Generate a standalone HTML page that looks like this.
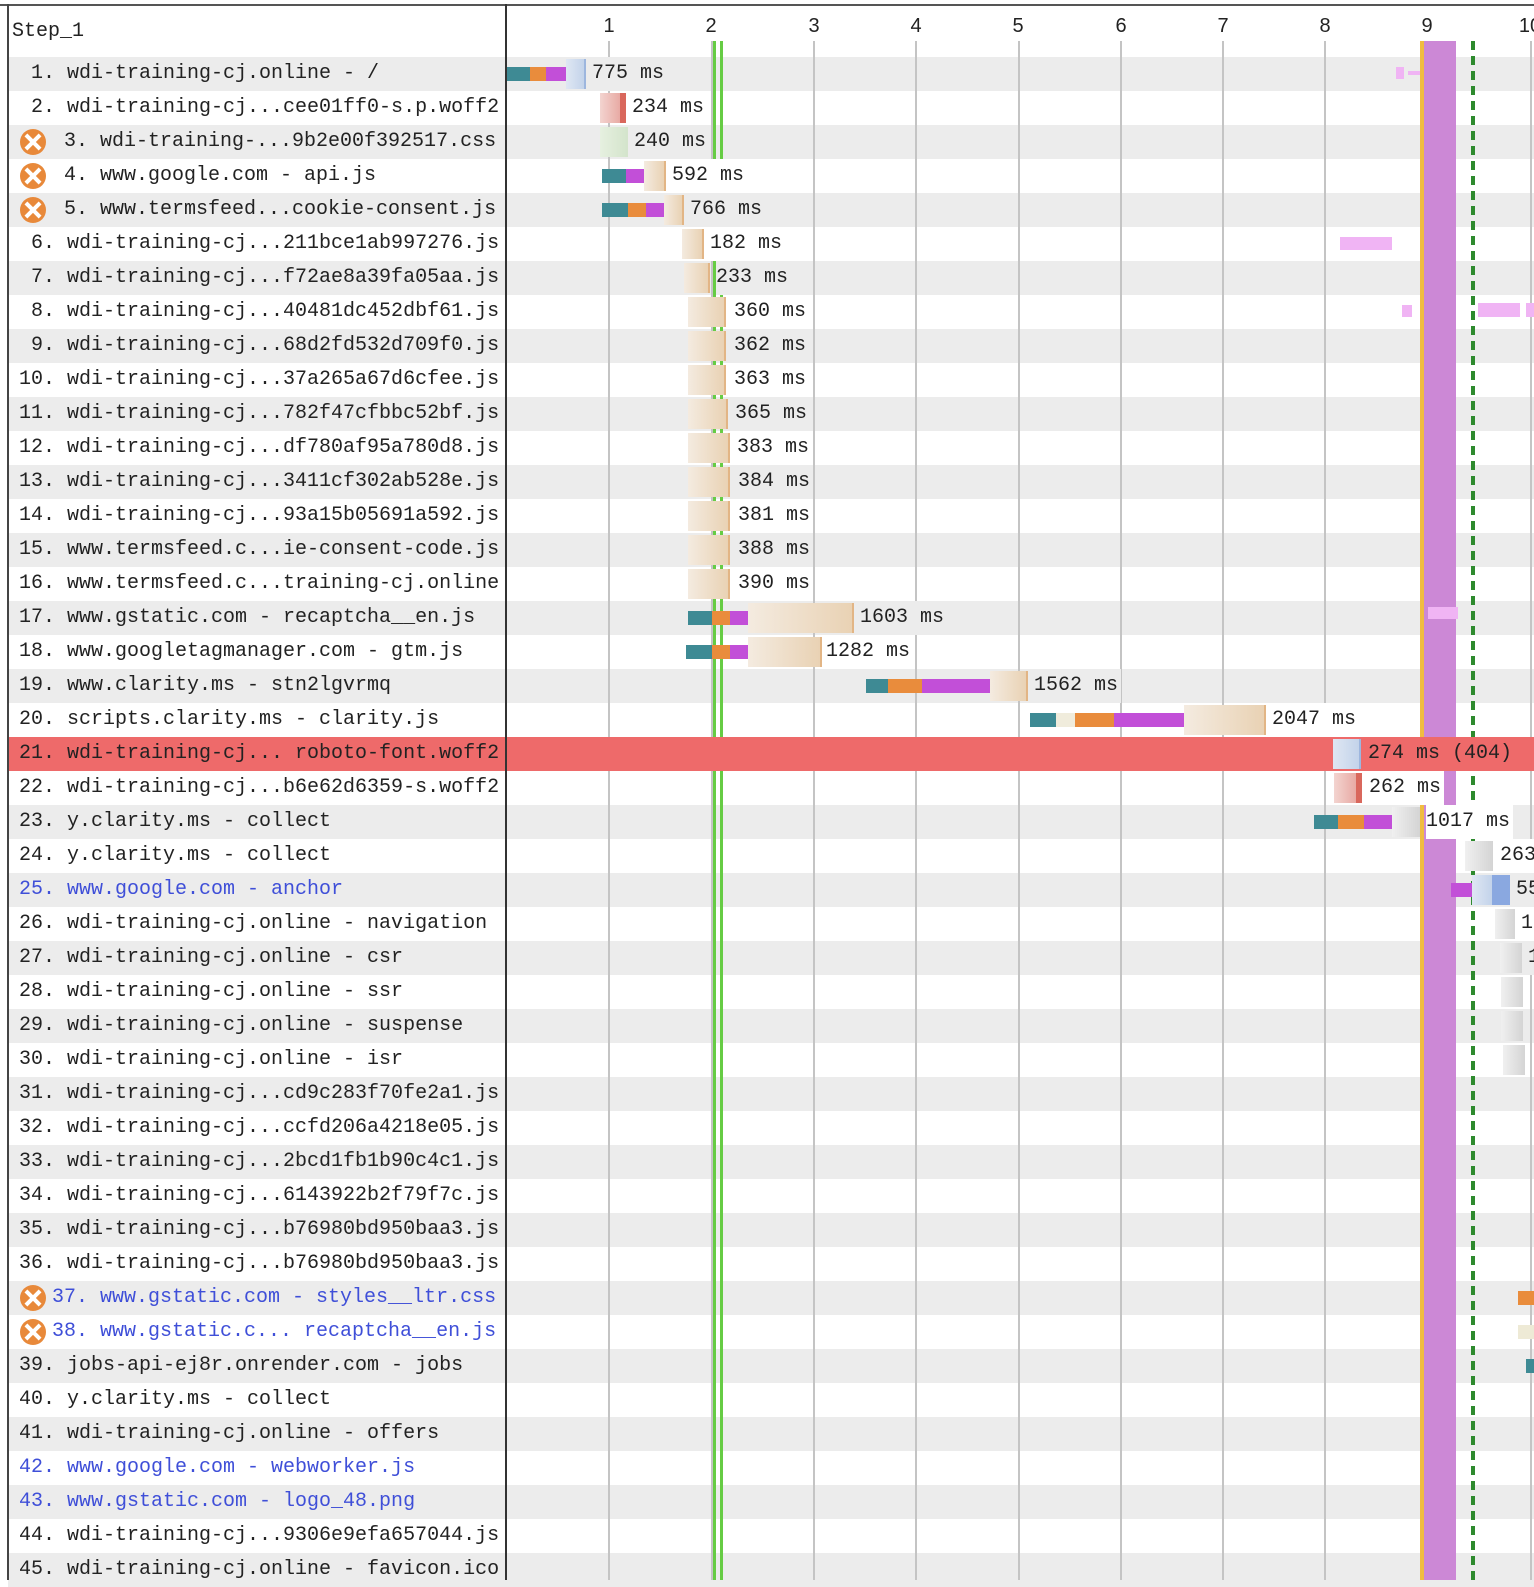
<!DOCTYPE html>
<html><head><meta charset="utf-8">
<style>
*{margin:0;padding:0;box-sizing:border-box}
body{width:1534px;height:1580px;background:#fff;position:relative;overflow:hidden;font-family:"Liberation Mono",monospace}
.r{position:absolute;left:8px;width:1526px;height:34px}
.g{background:#ececec}
.lab{position:absolute;left:11px;top:0;line-height:34px;font-size:20px;color:#222;white-space:pre;z-index:5}
.lab.e{left:44px}
.blue{color:#3f4fd8}
.ic{position:absolute;left:12px;top:4px;width:26px;height:26px;border-radius:50%;background:#e8893a;z-index:5}
.ic:before,.ic:after{content:"";position:absolute;left:3px;top:11px;width:20px;height:4px;background:#fff;transform:rotate(45deg)}
.ic:after{transform:rotate(-45deg)}
.t{position:absolute;top:10px;height:14px;z-index:4}
.b{position:absolute;top:2px;height:30px;z-index:4}
.tl{background:#3e8a94}.or{background:#e98c3c}.mg{background:#c24fd8}.cr{background:#f0ecdc}
.bg1{background:linear-gradient(90deg,#f4ebe0,#e9d2b4);border-right:2px solid #e2b585}
.bb{background:linear-gradient(90deg,#dfe7f3,#c3d3ea);border-right:2px solid #9db6de}
.bp{background:linear-gradient(90deg,#f3d4d0,#e8aaa4);border-right:6px solid #d9675c}
.bgr{background:linear-gradient(90deg,#e6f0e0,#d3e4cb)}
.bgy{background:linear-gradient(90deg,#f0f0f0,#d4d4d4)}
.ms{position:absolute;top:0;line-height:34px;font-size:20px;color:#222;z-index:5;white-space:pre;padding-right:3px}
.pk{position:absolute;background:#f0b4f4;z-index:4}
.gl{position:absolute;top:41px;width:2px;height:1539px;background:#c4c4c4;z-index:1}
.hn{position:absolute;top:15px;font-family:"Liberation Sans",sans-serif;font-size:20px;color:#222;width:40px;text-align:center}
</style></head><body>
<div style="position:absolute;left:0;top:4px;width:1534px;height:2px;background:#555"></div>
<div style="position:absolute;left:7px;top:4px;width:2px;height:1576px;background:#444;z-index:6"></div>
<div style="position:absolute;left:505px;top:4px;width:2px;height:1576px;background:#333;z-index:6"></div>
<div style="position:absolute;left:12px;top:20px;font-size:20px;color:#222">Step_1</div>

<div class="hn" style="left:589px">1</div><div class="hn" style="left:691px">2</div><div class="hn" style="left:794px">3</div><div class="hn" style="left:896px">4</div><div class="hn" style="left:998px">5</div><div class="hn" style="left:1101px">6</div><div class="hn" style="left:1203px">7</div><div class="hn" style="left:1305px">8</div><div class="hn" style="left:1407px">9</div><div class="hn" style="left:1510px">10</div>

<div class="gl" style="left:608px"></div><div class="gl" style="left:711px"></div><div class="gl" style="left:813px"></div><div class="gl" style="left:915px"></div><div class="gl" style="left:1018px"></div><div class="gl" style="left:1120px"></div><div class="gl" style="left:1222px"></div><div class="gl" style="left:1324px"></div><div class="gl" style="left:1426px"></div><div class="gl" style="left:1530px"></div>

<div style="position:absolute;left:1420px;top:41px;width:36px;height:1539px;background:#cc88d6;z-index:2"></div>
<div style="position:absolute;left:1420px;top:41px;width:4px;height:1539px;background:#f0bc40;z-index:2"></div>
<div style="position:absolute;left:1471px;top:41px;width:4px;height:1539px;background:repeating-linear-gradient(#2e8a2e 0 9px,transparent 9px 15px);z-index:3"></div>
<div style="position:absolute;left:713px;top:41px;width:10px;height:1539px;border-left:3px solid #66cc44;border-right:3px solid #66cc44;z-index:3"></div>

<div class="r g" style="top:57px"><div class="lab"> 1. wdi-training-cj.online - /</div>
<div class="t tl" style="left:498px;width:24px"></div><div class="t or" style="left:522px;width:16px"></div><div class="t mg" style="left:538px;width:20px"></div><div class="b bb" style="left:558px;width:20px"></div><div class="ms g" style="left:584px">775 ms</div>
<div class="pk" style="left:1388px;top:10px;width:8px;height:12px"></div><div class="pk" style="left:1400px;top:14px;width:12px;height:4px"></div></div>
<div class="r" style="top:91px"><div class="lab"> 2. wdi-training-cj...cee01ff0-s.p.woff2</div>
<div class="b bp" style="left:592px;width:26px"></div><div class="ms" style="left:624px;background:#fff">234 ms</div></div>
<div class="r g" style="top:125px"><div class="ic"></div><div class="lab e"> 3. wdi-training-...9b2e00f392517.css</div>
<div class="b bgr" style="left:592px;width:28px"></div><div class="ms g" style="left:626px">240 ms</div></div>
<div class="r" style="top:159px"><div class="ic"></div><div class="lab e"> 4. www.google.com - api.js</div>
<div class="t tl" style="left:594px;width:24px"></div><div class="t mg" style="left:618px;width:18px"></div><div class="b bg1" style="left:636px;width:22px"></div><div class="ms" style="left:664px;background:#fff">592 ms</div></div>
<div class="r g" style="top:193px"><div class="ic"></div><div class="lab e"> 5. www.termsfeed...cookie-consent.js</div>
<div class="t tl" style="left:594px;width:26px"></div><div class="t or" style="left:620px;width:18px"></div><div class="t mg" style="left:638px;width:18px"></div><div class="b bg1" style="left:656px;width:20px"></div><div class="ms g" style="left:682px">766 ms</div></div>
<div class="r" style="top:227px"><div class="lab"> 6. wdi-training-cj...211bce1ab997276.js</div>
<div class="b bg1" style="left:674px;width:22px"></div><div class="ms" style="left:702px;background:#fff">182 ms</div>
<div class="pk" style="left:1332px;top:10px;width:52px;height:13px"></div></div>
<div class="r g" style="top:261px"><div class="lab"> 7. wdi-training-cj...f72ae8a39fa05aa.js</div>
<div class="b bg1" style="left:676px;width:26px"></div><div class="ms g" style="left:708px">233 ms</div></div>
<div class="r" style="top:295px"><div class="lab"> 8. wdi-training-cj...40481dc452dbf61.js</div>
<div class="b bg1" style="left:680px;width:38px"></div><div class="ms" style="left:726px;background:#fff">360 ms</div>
<div class="pk" style="left:1394px;top:10px;width:10px;height:12px"></div><div class="pk" style="left:1470px;top:8px;width:42px;height:14px"></div><div class="pk" style="left:1518px;top:8px;width:8px;height:14px"></div></div>
<div class="r g" style="top:329px"><div class="lab"> 9. wdi-training-cj...68d2fd532d709f0.js</div>
<div class="b bg1" style="left:680px;width:38px"></div><div class="ms g" style="left:726px">362 ms</div></div>
<div class="r" style="top:363px"><div class="lab">10. wdi-training-cj...37a265a67d6cfee.js</div>
<div class="b bg1" style="left:680px;width:38px"></div><div class="ms" style="left:726px;background:#fff">363 ms</div></div>
<div class="r g" style="top:397px"><div class="lab">11. wdi-training-cj...782f47cfbbc52bf.js</div>
<div class="b bg1" style="left:680px;width:40px"></div><div class="ms g" style="left:727px">365 ms</div></div>
<div class="r" style="top:431px"><div class="lab">12. wdi-training-cj...df780af95a780d8.js</div>
<div class="b bg1" style="left:680px;width:42px"></div><div class="ms" style="left:729px;background:#fff">383 ms</div></div>
<div class="r g" style="top:465px"><div class="lab">13. wdi-training-cj...3411cf302ab528e.js</div>
<div class="b bg1" style="left:680px;width:42px"></div><div class="ms g" style="left:730px">384 ms</div></div>
<div class="r" style="top:499px"><div class="lab">14. wdi-training-cj...93a15b05691a592.js</div>
<div class="b bg1" style="left:680px;width:42px"></div><div class="ms" style="left:730px;background:#fff">381 ms</div></div>
<div class="r g" style="top:533px"><div class="lab">15. www.termsfeed.c...ie-consent-code.js</div>
<div class="b bg1" style="left:680px;width:42px"></div><div class="ms g" style="left:730px">388 ms</div></div>
<div class="r" style="top:567px"><div class="lab">16. www.termsfeed.c...training-cj.online</div>
<div class="b bg1" style="left:680px;width:42px"></div><div class="ms" style="left:730px;background:#fff">390 ms</div></div>
<div class="r g" style="top:601px"><div class="lab">17. www.gstatic.com - recaptcha__en.js</div>
<div class="t tl" style="left:680px;width:24px"></div><div class="t or" style="left:704px;width:18px"></div><div class="t mg" style="left:722px;width:20px"></div><div class="b bg1" style="left:740px;width:106px"></div><div class="ms g" style="left:852px">1603 ms</div>
<div class="pk" style="left:1420px;top:6px;width:30px;height:12px"></div></div>
<div class="r" style="top:635px"><div class="lab">18. www.googletagmanager.com - gtm.js</div>
<div class="t tl" style="left:678px;width:26px"></div><div class="t or" style="left:704px;width:18px"></div><div class="t mg" style="left:722px;width:20px"></div><div class="b bg1" style="left:740px;width:74px"></div><div class="ms" style="left:818px;background:#fff">1282 ms</div></div>
<div class="r g" style="top:669px"><div class="lab">19. www.clarity.ms - stn2lgvrmq</div>
<div class="t tl" style="left:858px;width:22px"></div><div class="t or" style="left:880px;width:34px"></div><div class="t mg" style="left:914px;width:70px"></div><div class="b bg1" style="left:982px;width:38px"></div><div class="ms g" style="left:1026px">1562 ms</div></div>
<div class="r" style="top:703px"><div class="lab">20. scripts.clarity.ms - clarity.js</div>
<div class="t tl" style="left:1022px;width:26px"></div><div class="t cr" style="left:1048px;width:19px"></div><div class="t or" style="left:1067px;width:39px"></div><div class="t mg" style="left:1106px;width:70px"></div><div class="b bg1" style="left:1176px;width:82px"></div><div class="ms" style="left:1264px;background:#fff">2047 ms</div></div>
<div style="position:absolute;left:8px;top:737px;width:1526px;height:34px;background:#ee6a6a;z-index:3"></div>
<div class="r" style="top:737px"><div class="lab">21. wdi-training-cj... roboto-font.woff2</div>
<div class="b bb" style="left:1325px;width:28px"></div><div class="ms" style="left:1360px">274 ms (404)</div></div>
<div class="r" style="top:771px"><div class="lab">22. wdi-training-cj...b6e62d6359-s.woff2</div>
<div class="b bp" style="left:1326px;width:28px"></div><div class="ms" style="left:1361px;background:#fff">262 ms</div></div>
<div class="r g" style="top:805px"><div class="lab">23. y.clarity.ms - collect</div>
<div class="t tl" style="left:1306px;width:24px"></div><div class="t or" style="left:1330px;width:26px"></div><div class="t mg" style="left:1356px;width:28px"></div><div class="b bgy" style="left:1384px;width:28px"></div><div class="ms" style="left:1418px;background:#fff">1017 ms</div></div>
<div class="r" style="top:839px"><div class="lab">24. y.clarity.ms - collect</div>
<div class="b bgy" style="left:1457px;width:28px"></div><div class="ms" style="left:1492px;background:#fff">263 ms</div></div>
<div class="r g" style="top:873px"><div class="lab blue">25. www.google.com - anchor</div>
<div class="t mg" style="left:1443px;width:21px"></div><div class="b bb" style="left:1464px;width:20px;border:0"></div><div class="b" style="left:1484px;width:18px;background:#8aa8e0"></div><div class="ms g" style="left:1508px">55</div></div>
<div class="r" style="top:907px"><div class="lab">26. wdi-training-cj.online - navigation</div>
<div class="b bgy" style="left:1487px;width:20px"></div><div class="ms" style="left:1513px;background:#fff">1</div></div>
<div class="r g" style="top:941px"><div class="lab">27. wdi-training-cj.online - csr</div>
<div class="b bgy" style="left:1492px;width:22px"></div><div class="ms g" style="left:1520px">1</div></div>
<div class="r" style="top:975px"><div class="lab">28. wdi-training-cj.online - ssr</div>
<div class="b bgy" style="left:1493px;width:22px"></div></div>
<div class="r g" style="top:1009px"><div class="lab">29. wdi-training-cj.online - suspense</div>
<div class="b bgy" style="left:1493px;width:22px"></div></div>
<div class="r" style="top:1043px"><div class="lab">30. wdi-training-cj.online - isr</div>
<div class="b bgy" style="left:1495px;width:22px"></div></div>
<div class="r g" style="top:1077px"><div class="lab">31. wdi-training-cj...cd9c283f70fe2a1.js</div></div>
<div class="r" style="top:1111px"><div class="lab">32. wdi-training-cj...ccfd206a4218e05.js</div></div>
<div class="r g" style="top:1145px"><div class="lab">33. wdi-training-cj...2bcd1fb1b90c4c1.js</div></div>
<div class="r" style="top:1179px"><div class="lab">34. wdi-training-cj...6143922b2f79f7c.js</div></div>
<div class="r g" style="top:1213px"><div class="lab">35. wdi-training-cj...b76980bd950baa3.js</div></div>
<div class="r" style="top:1247px"><div class="lab">36. wdi-training-cj...b76980bd950baa3.js</div></div>
<div class="r g" style="top:1281px"><div class="ic"></div><div class="lab e blue">37. www.gstatic.com - styles__ltr.css</div>
<div class="t or" style="left:1510px;width:16px"></div></div>
<div class="r" style="top:1315px"><div class="ic"></div><div class="lab e blue">38. www.gstatic.c... recaptcha__en.js</div>
<div class="t cr" style="left:1510px;width:16px;background:#eeead6"></div></div>
<div class="r g" style="top:1349px"><div class="lab">39. jobs-api-ej8r.onrender.com - jobs</div>
<div class="t tl" style="left:1518px;width:8px"></div></div>
<div class="r" style="top:1383px"><div class="lab">40. y.clarity.ms - collect</div></div>
<div class="r g" style="top:1417px"><div class="lab">41. wdi-training-cj.online - offers</div></div>
<div class="r" style="top:1451px"><div class="lab blue">42. www.google.com - webworker.js</div></div>
<div class="r g" style="top:1485px"><div class="lab blue">43. www.gstatic.com - logo_48.png</div></div>
<div class="r" style="top:1519px"><div class="lab">44. wdi-training-cj...9306e9efa657044.js</div></div>
<div class="r g" style="top:1553px"><div class="lab">45. wdi-training-cj.online - favicon.ico</div></div>
</body></html>
